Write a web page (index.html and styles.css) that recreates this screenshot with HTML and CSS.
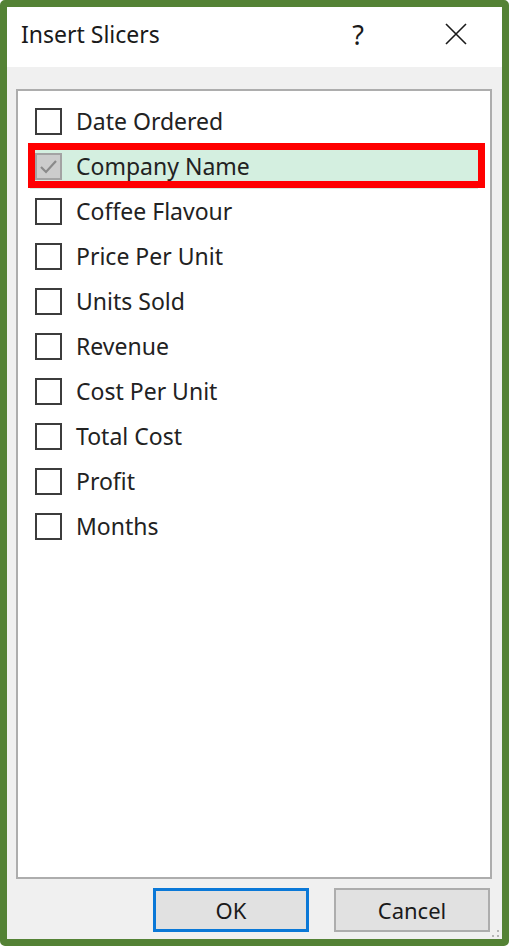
FILE: index.html
```html
<!DOCTYPE html>
<html>
<head>
<meta charset="utf-8">
<link rel="stylesheet" href="styles.css">
</head>
<body>
<div class="frame">
  <div class="titlebar">
    <span class="title">Insert Slicers</span>
    <span class="help">?</span>
    <svg class="close" width="22" height="22" viewBox="0 0 22 22"><path d="M1 1 L21 21 M21 1 L1 21" stroke="#1a1a1a" stroke-width="1.6" fill="none"/></svg>
  </div>
  <div class="body">
    <div class="listbox">
      <div class="row"><span class="cb"></span><span class="label">Date Ordered</span></div>
      <div class="row selected"><span class="cb checked"><svg width="23" height="23" viewBox="0 0 23 23"><path d="M4 12 L9 17 L19 6" stroke="#8a8a8a" stroke-width="2.2" fill="none"/></svg></span><span class="label">Company Name</span><span class="redbox"></span></div>
      <div class="row"><span class="cb"></span><span class="label">Coffee Flavour</span></div>
      <div class="row"><span class="cb"></span><span class="label">Price Per Unit</span></div>
      <div class="row"><span class="cb"></span><span class="label">Units Sold</span></div>
      <div class="row"><span class="cb"></span><span class="label">Revenue</span></div>
      <div class="row"><span class="cb"></span><span class="label">Cost Per Unit</span></div>
      <div class="row"><span class="cb"></span><span class="label">Total Cost</span></div>
      <div class="row"><span class="cb"></span><span class="label">Profit</span></div>
      <div class="row"><span class="cb"></span><span class="label">Months</span></div>
    </div>
    <div class="buttons">
      <button class="btn ok">OK</button>
      <button class="btn">Cancel</button>
    </div>
    <svg class="grip" width="8" height="8" viewBox="0 0 8 8"><rect x="5" y="0" width="2" height="2" fill="#b5b5b5"/><rect x="5" y="5" width="2" height="2" fill="#b5b5b5"/><rect x="0" y="5" width="2" height="2" fill="#b5b5b5"/></svg>
  </div>
</div>
</body>
</html>
```

FILE: styles.css
```css
html, body {
  margin: 0;
  padding: 0;
  background: #ffffff;
}
body {
  font-family: "Noto Sans", "Open Sans", sans-serif;
  color: #1a1a1a;
}
.frame {
  box-sizing: border-box;
  width: 509px;
  height: 946px;
  border: 7px solid #548235;
  border-radius: 5px;
  display: flex;
  flex-direction: column;
  background: #f0f0f0;
}
.titlebar {
  height: 60px;
  background: #ffffff;
  display: flex;
  align-items: center;
  padding-left: 14px;
  flex: none;
}
.title {
  font-size: 23px;
  flex: 1;
  position: relative;
  top: -3px;
}
.help {
  font-size: 27px;
  margin-right: 81px;
  position: relative;
  top: -3px;
}
.close {
  margin-right: 35px;
  position: relative;
  top: -3px;
}
.body {
  flex: 1;
  display: flex;
  flex-direction: column;
  padding: 22px 10px 6px 9px;
  position: relative;
}
.listbox {
  box-sizing: border-box;
  height: 790px;
  border: 2px solid #adadad;
  background: #ffffff;
  padding-top: 8px;
  display: flex;
  flex-direction: column;
}
.row {
  height: 45px;
  display: flex;
  align-items: center;
  padding-left: 17px;
  position: relative;
  flex: none;
}
.row.selected {
  background: #d4efe0;
  margin: 0 12px 0 12px;
  padding-left: 5px;
}
.cb {
  box-sizing: border-box;
  width: 27px;
  height: 27px;
  border: 2px solid #3c3c3c;
  background: #ffffff;
  flex: none;
  display: flex;
  align-items: center;
  justify-content: center;
}
.cb.checked {
  background: #cccccc;
  border-color: #a3a3a3;
}
.label {
  font-size: 23px;
  margin-left: 14px;
  position: relative;
  top: -1px;
  color: #222222;
}
.redbox {
  position: absolute;
  left: -2px;
  top: -1px;
  width: 457px;
  height: 45px;
  box-sizing: border-box;
  border: 7px solid #ff0000;
}
.buttons {
  display: flex;
  justify-content: flex-end;
  gap: 25px;
  margin-top: 9px;
  padding-right: 2px;
}
.btn {
  box-sizing: border-box;
  width: 156px;
  height: 44px;
  background: #e1e1e1;
  border: 2px solid #adadad;
  font-family: "Noto Sans", "Open Sans", sans-serif;
  font-size: 22px;
  color: #1a1a1a;
  padding: 0;
}
.btn.ok {
  border: 3px solid #0a78d7;
}
.grip {
  position: absolute;
  right: 2px;
  bottom: 1px;
}
```
